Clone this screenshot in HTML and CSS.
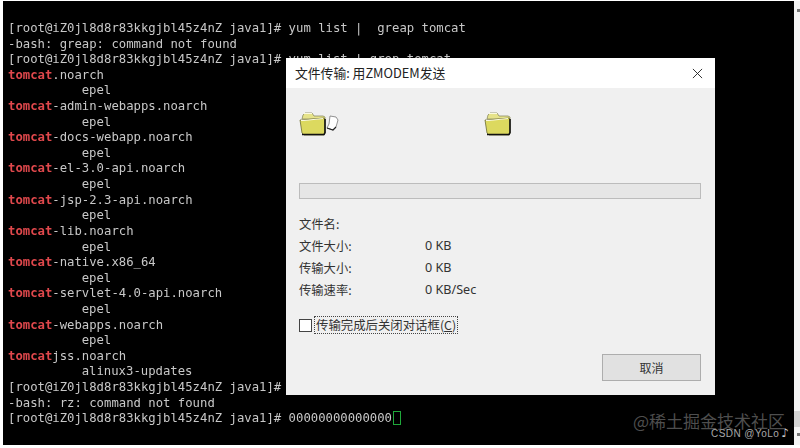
FILE: index.html
```html
<!DOCTYPE html>
<html lang="zh">
<head>
<meta charset="utf-8">
<title>ZMODEM</title>
<link rel="stylesheet" href="styles.css">
</head>
<body>
<div class="screen">
  <main class="term">
    <div class="output">
      <div>[root@iZ0jl8d8r83kkgjbl45z4nZ java1]# yum list |  greap tomcat</div>
      <div>-bash: greap: command not found</div>
      <div>[root@iZ0jl8d8r83kkgjbl45z4nZ java1]# yum list | grep tomcat</div>
      <div><b>tomcat</b><span>.noarch</span></div>
      <div class="repo">epel</div>
      <div><b>tomcat</b><span>-admin-webapps.noarch</span></div>
      <div class="repo">epel</div>
      <div><b>tomcat</b><span>-docs-webapp.noarch</span></div>
      <div class="repo">epel</div>
      <div><b>tomcat</b><span>-el-3.0-api.noarch</span></div>
      <div class="repo">epel</div>
      <div><b>tomcat</b><span>-jsp-2.3-api.noarch</span></div>
      <div class="repo">epel</div>
      <div><b>tomcat</b><span>-lib.noarch</span></div>
      <div class="repo">epel</div>
      <div><b>tomcat</b><span>-native.x86_64</span></div>
      <div class="repo">epel</div>
      <div><b>tomcat</b><span>-servlet-4.0-api.noarch</span></div>
      <div class="repo">epel</div>
      <div><b>tomcat</b><span>-webapps.noarch</span></div>
      <div class="repo">epel</div>
      <div><b>tomcat</b><span>jss.noarch</span></div>
      <div class="repo">alinux3-updates</div>
      <div>[root@iZ0jl8d8r83kkgjbl45z4nZ java1]# rz</div>
      <div>-bash: rz: command not found</div>
      <div>[root@iZ0jl8d8r83kkgjbl45z4nZ java1]# 00000000000000<i class="cursor"></i></div>
    </div>
  </main>
  <div class="scroll"><span class="arrow"></span><span class="thumb"></span><span class="arrow"></span></div>

  <section class="dialog">
    <header class="title">
      <span>文件传输: 用ZMODEM发送</span>
      <svg class="close" viewBox="0 0 12 12"><path d="M1 1l10 10M11 1L1 11"/></svg>
    </header>
    <div class="body">
      <div class="icons">
        <div class="src">
          <svg class="folder" viewBox="0 0 28 24"><path class="fb" d="M3 7l1-4 2-2h7l2 3h9l2 1v2z"/><path class="ff" d="M1 8h3l21-2 1 1v14l-1 2H5l-2-2z"/><path class="fs" d="M3 22.5h22l1-2V7"/><path class="fl" d="M2 8.500h3l19-2M5 1.500h8"/></svg>
          <svg class="sheet" viewBox="0 0 14 16"><path class="page" d="M5 1l6 1 2 3-2 7-3 3-6-2 2-4z"/><path class="edge" d="M2 13l6 2 3-3"/></svg>
        </div>
        <svg class="folder" viewBox="0 0 28 24"><path class="fb" d="M3 7l1-4 2-2h7l2 3h9l2 1v2z"/><path class="ff" d="M1 8h3l21-2 1 1v14l-1 2H5l-2-2z"/><path class="fs" d="M3 22.5h22l1-2V7"/><path class="fl" d="M2 8.500h3l19-2M5 1.500h8"/></svg>
      </div>
      <div class="progress"></div>
      <dl class="info">
        <div><dt>文件名:</dt><dd></dd></div>
        <div><dt>文件大小:</dt><dd>0 KB</dd></div>
        <div><dt>传输大小:</dt><dd>0 KB</dd></div>
        <div><dt>传输速率:</dt><dd>0 KB/Sec</dd></div>
      </dl>
      <label class="check"><span class="box"></span><span class="focus">传输完成后关闭对话框(<u>C</u>)</span></label>
      <div class="actions"><button class="cancel" type="button">取消</button></div>
    </div>
  </section>

  <div class="wm1">@稀土掘金技术社区</div>
  <div class="wm2">CSDN @YoLo<span class="note">♪</span></div>
</div>
</body>
</html>
```
FILE: styles.css
```css
* { box-sizing: border-box; }
html, body { margin: 0; padding: 0; width: 800px; height: 448px; overflow: hidden; background: #fff; }
.screen { position: relative; width: 800px; height: 448px; display: flex; padding: 1px 0 3px 3px; background: #fff; }
.term { flex: 1; background: #000; padding: 20px 0 0 5px; overflow: hidden; }
.output { font: 12.28px/15.62px "DejaVu Sans Mono", monospace; color: #c8c8c8; filter: blur(.3px); }
.output div { white-space: pre; height: 15.62px; }
.output b { color: #e0484c; font-weight: 700; }
.output .repo { padding-left: 73.7px; }
.cursor { display: inline-block; width: 8px; height: 14px; border: 1px solid #1fa83a; vertical-align: -3px; margin-left: 1px; }
.scroll { width: 6.5px; background: #f4f4f4; display: flex; flex-direction: column; align-items: stretch; padding: 8px 0 9px; }
.arrow { height: 3px; margin-left: 3px; width: 3px; background: #777; flex: none; }
.thumb { height: 16px; margin-top: auto; margin-bottom: 6px; background: #d4d4d4; flex: none; }
.dialog { position: absolute; left: 286px; top: 58px; width: 429px; height: 337px; background: #f0f0f0; display: flex; flex-direction: column; font: 12.3px/16px "Noto Sans CJK SC", "Liberation Sans", sans-serif; color: #333; }
.title { height: 30px; background: #fff; display: flex; align-items: center; justify-content: space-between; padding: 0 12px 0 9px; font-size: 12.8px; color: #222; flex: none; }
.close { width: 11px; height: 11px; fill: none; stroke: #222; stroke-width: 1; }
.body { flex: 1; display: flex; flex-direction: column; padding: 0 14px 14px 13px; }
.icons { display: flex; gap: 145px; height: 95px; padding-top: 24px; flex: none; }
.src { display: flex; width: 40px; align-items: flex-start; }
.folder { width: 28px; height: 24px; flex: none; }
.fb { fill: #e6e38a; stroke: #8a8a60; stroke-width: .8; }
.ff { fill: #dcd95f; stroke: #6a6a30; stroke-width: .8; }
.fs { fill: none; stroke: #111; stroke-width: 1.6; }
.fl { fill: none; stroke: #fbfae0; stroke-width: 1; }
.sheet { width: 14px; height: 16px; margin-top: 3px; margin-left: -2px; }
.page { fill: #fff; stroke: #777; stroke-width: .8; }
.edge { fill: none; stroke: #222; stroke-width: 1.2; }
.progress { height: 16px; background: #e6e6e6; border: 1px solid #bcbcbc; flex: none; }
.info { margin: 17px 0 0; padding: 0; display: flex; flex-direction: column; gap: 6px; }
.info div { display: flex; height: 16px; }
.info dt { width: 126px; }
.info dd { margin: 0; font-family: "Noto Sans", "Liberation Sans", sans-serif; font-size: 12.6px; }
.check { display: flex; align-items: center; gap: 2px; margin-top: 18px; }
.box { width: 13px; height: 13px; background: #fff; border: 1px solid #444; }
.focus { border: 1px dotted #444; height: 18px; line-height: 16px; padding: 0 1px; font-size: 12.4px; }
.actions { margin-top: auto; display: flex; justify-content: flex-end; }
.cancel { width: 99px; height: 27px; background: #e1e1e1; border: 1px solid #adadad; font: 12px "Noto Sans CJK SC", sans-serif; color: #333; padding: 0; }
.wm1 { position: absolute; left: 633px; top: 410px; font: 17px/22px "Noto Sans CJK SC", sans-serif; color: #4e4e4e; white-space: nowrap; }
.wm2 { position: absolute; left: 711px; top: 426px; font: 10px/14px "Liberation Sans", sans-serif; letter-spacing: .45px; color: #a8a8a8; white-space: nowrap; }
.note { font: 12px/14px "DejaVu Sans", sans-serif; margin-left: 2px; color: #c8c8c8; }
```
